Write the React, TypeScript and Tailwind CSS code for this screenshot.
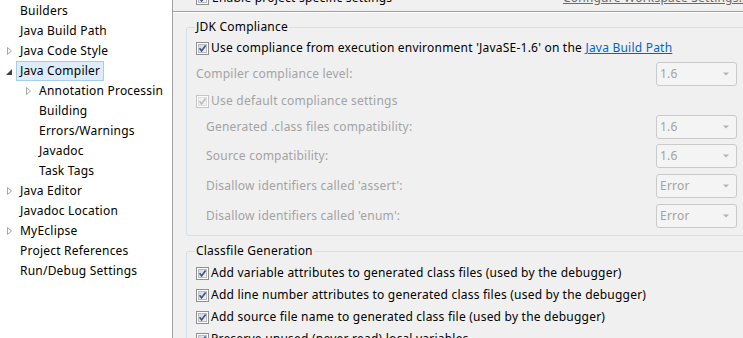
import React from "react";

function Check({ disabled }: { disabled?: boolean }) {
  return (
    <svg width="13" height="13" viewBox="0 0 13 13" className="shrink-0">
      <defs>
        <linearGradient id="cbg" x1="0" y1="0" x2="1" y2="1">
          <stop offset="0" stopColor="#d0d4da" />
          <stop offset="1" stopColor="#f7f7f7" />
        </linearGradient>
      </defs>
      <rect x="0.5" y="0.5" width="12" height="12" fill="#ffffff" stroke={disabled ? "#c6c6c6" : "#8e8f8f"} />
      <rect
        x="2.5"
        y="2.5"
        width="8"
        height="8"
        fill={disabled ? "#f2f2f2" : "url(#cbg)"}
        stroke={disabled ? "#dedede" : "#b9bdc3"}
      />
      <path
        d="M3.6 6.2 L5.6 8.9 L9.6 3.4"
        stroke={disabled ? "#bdbdbd" : "#3f5489"}
        strokeWidth="1.7"
        fill="none"
      />
    </svg>
  );
}

function Combo({ value }: { value: string }) {
  return (
    <div className="w-[81px] h-[24px] shrink-0 box-border border border-[#cacaca] rounded-[3px] bg-[#f4f4f4] flex items-center justify-between pl-[3px] pr-[7px] text-[#a3a3a3]">
      <span>{value}</span>
      <svg width="6" height="4" viewBox="0 0 6 4">
        <path d="M0 0.5 H6 L3 3.5 Z" fill="#b3b3b3" />
      </svg>
    </div>
  );
}

function Collapsed() {
  return (
    <svg width="12" height="20" viewBox="0 0 12 20" className="shrink-0">
      <path d="M3.5 6.5 L3.5 13.5 L7.5 10 Z" fill="none" stroke="#a7a7a7" strokeWidth="1" />
    </svg>
  );
}

function Expanded() {
  return (
    <svg width="12" height="20" viewBox="0 0 12 20" className="shrink-0">
      <path d="M8 8 L8 14 L2 14 Z" fill="#404040" />
    </svg>
  );
}

type TreeItem = { label: string; level: number; arrow?: "c" | "e"; selected?: boolean };

const tree: TreeItem[] = [
  { label: "Builders", level: 1 },
  { label: "Java Build Path", level: 1 },
  { label: "Java Code Style", level: 1, arrow: "c" },
  { label: "Java Compiler", level: 1, arrow: "e", selected: true },
  { label: "Annotation Processin", level: 2, arrow: "c" },
  { label: "Building", level: 2 },
  { label: "Errors/Warnings", level: 2 },
  { label: "Javadoc", level: 2 },
  { label: "Task Tags", level: 2 },
  { label: "Java Editor", level: 1, arrow: "c" },
  { label: "Javadoc Location", level: 1 },
  { label: "MyEclipse", level: 1, arrow: "c" },
  { label: "Project References", level: 1 },
  { label: "Run/Debug Settings", level: 1 },
];

function ComboRow({ label, value, indent, mt }: { label: string; value: string; indent?: boolean; mt: string }) {
  return (
    <div className={`flex items-center h-[24px] ${mt}`}>
      <span className={`flex-1 text-[#a3a3a3] ${indent ? "pl-[10px]" : ""}`}>{label}</span>
      <Combo value={value} />
    </div>
  );
}

export default function App() {
  return (
    <div className="w-[743px] h-[338px] overflow-hidden flex font-['Noto_Sans',sans-serif] text-[12px] leading-[16px] tracking-[0.22px] text-black">
      {/* Tree */}
      <div className="w-[173px] shrink-0 h-full box-border bg-white border-r border-[#a0a0a0] pt-[1px]">
        {tree.map((t) => (
          <div
            key={t.label}
            className={`h-[20px] flex items-center whitespace-nowrap overflow-hidden ${t.level === 1 ? "pl-[4px]" : "pl-[23px]"}`}
          >
            {t.arrow === "c" ? <Collapsed /> : t.arrow === "e" ? <Expanded /> : <span className="w-[12px] shrink-0" />}
            <span
              className={`h-[20px] box-border flex items-center px-[3px] border ${
                t.selected ? "bg-[#ddecfb] border-[#a5cdf0]" : "border-transparent"
              }`}
            >
              {t.label}
            </span>
          </div>
        ))}
      </div>

      {/* Right panel */}
      <div className="flex-1 h-full bg-[#f0f0f0] overflow-hidden">
        {/* top row, cut off */}
        <div className="h-[11px] overflow-hidden flex items-end justify-between pl-[23px] whitespace-nowrap">
          <div className="flex items-center gap-[3px] mb-[5px]">
            <Check />
            <span>Enable project specific settings</span>
          </div>
          <span className="mb-[5px] mr-[-6px] underline text-[#6b6b6b]">Configure Workspace Settings...</span>
        </div>
        <div className="h-[1px] bg-[#a0a0a0]" />
        <div className="h-[1px] bg-white" />

        {/* JDK Compliance */}
        <fieldset className="mt-[5px] ml-[13px] w-[566px] box-border border border-[#d5dfe5] rounded-[3px] pl-[9px] pr-[14px] pb-[7px] whitespace-nowrap">
          <legend className="px-[1px] ml-[-1px] leading-[18px]">JDK Compliance</legend>
          <div className="flex items-center gap-[2px] h-[16px] mt-[4px]">
            <Check />
            <span>
              Use compliance from execution environment 'JavaSE-1.6' on the{" "}
              <span className="text-[#0066cc] underline">Java Build Path</span>
            </span>
          </div>
          <ComboRow label="Compiler compliance level:" value="1.6" mt="mt-[6px]" />
          <div className="flex items-center gap-[2px] h-[16px] mt-[7px] text-[#a3a3a3]">
            <Check disabled />
            <span>Use default compliance settings</span>
          </div>
          <ComboRow label="Generated .class files compatibility:" value="1.6" indent mt="mt-[6px]" />
          <ComboRow label="Source compatibility:" value="1.6" indent mt="mt-[5px]" />
          <ComboRow label="Disallow identifiers called 'assert':" value="Error" indent mt="mt-[6px]" />
          <ComboRow label="Disallow identifiers called 'enum':" value="Error" indent mt="mt-[6px]" />
        </fieldset>

        {/* Classfile Generation */}
        <fieldset className="mt-[6px] ml-[13px] w-[566px] box-border border border-[#d5dfe5] rounded-[3px] pl-[9px] pr-[14px] pb-[7px] whitespace-nowrap">
          <legend className="px-[1px] ml-[-1px] leading-[18px]">Classfile Generation</legend>
          <div className="mt-[2px]">
            {[
              "Add variable attributes to generated class files (used by the debugger)",
              "Add line number attributes to generated class files (used by the debugger)",
              "Add source file name to generated class file (used by the debugger)",
              "Preserve unused (never read) local variables",
            ].map((s) => (
              <div key={s} className="flex items-center gap-[2px] h-[22px]">
                <Check />
                <span>{s}</span>
              </div>
            ))}
          </div>
        </fieldset>
      </div>
    </div>
  );
}
